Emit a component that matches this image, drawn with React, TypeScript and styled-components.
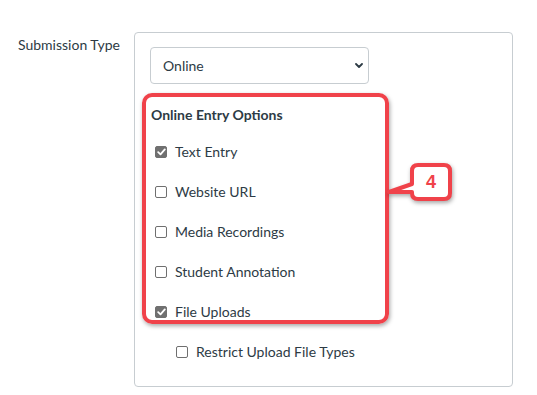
import React from 'react';
import styled, { createGlobalStyle } from 'styled-components';

const ink = '#2d3b45';
const line = '#c7cdd1';
const red = '#f0424a';

const GlobalStyle = createGlobalStyle`
  html, body {
    margin: 0;
    padding: 0;
    background: #ffffff;
  }
  body {
    font-family: Lato, 'Noto Sans', sans-serif;
    font-size: 14px;
    color: ${ink};
  }
`;

const Page = styled.div`
  position: relative;
  width: 537px;
  height: 395px;
  box-sizing: border-box;
  padding: 32px 0 0 18px;
  display: flex;
  align-items: flex-start;
`;

const FieldLabel = styled.div`
  width: 116px;
  margin-top: 3px;
  line-height: 20px;
  font-size: 14px;
`;

const Panel = styled.div`
  width: 379px;
  box-sizing: border-box;
  border: 1px solid ${line};
  border-radius: 4px;
  padding: 14px 15px 26px 15px;
  display: flex;
  flex-direction: column;
  align-items: flex-start;
`;

const SelectWrap = styled.div`
  position: relative;
  width: 219px;
  height: 37px;
`;

const Select = styled.select`
  appearance: none;
  width: 100%;
  height: 100%;
  box-sizing: border-box;
  border: 1px solid ${line};
  border-radius: 4px;
  background: #ffffff;
  padding: 0 30px 0 12px;
  font-family: Lato, 'Noto Sans', sans-serif;
  font-size: 14px;
  color: ${ink};
  outline: none;
`;

const Chevron = styled.svg`
  position: absolute;
  right: 6px;
  top: 16px;
  width: 8px;
  height: 5px;
  pointer-events: none;
`;

const Highlight = styled.div`
  margin: 9px 0 0 -8px;
  width: 247px;
  height: 231px;
  box-sizing: border-box;
  border: 4px solid ${red};
  border-radius: 10px;
  box-shadow: 1px 2px 4px rgba(0, 0, 0, 0.35);
  padding: 8px 5px 0 5px;
  display: flex;
  flex-direction: column;
  gap: 24px;
`;

const GroupTitle = styled.div`
  font-weight: 700;
  line-height: 20px;
  margin-bottom: -5px;
`;

const Option = styled.label<{ $indent?: number }>`
  display: flex;
  align-items: center;
  gap: 8px;
  height: 16px;
  margin-left: ${(p) => p.$indent ?? 4}px;
  line-height: 16px;
  font-size: 14px;
  white-space: nowrap;
`;

const Box = styled.span<{ $checked?: boolean }>`
  width: 12px;
  height: 12px;
  box-sizing: border-box;
  border-radius: 2px;
  flex: none;
  display: flex;
  align-items: center;
  justify-content: center;
  background: ${(p) => (p.$checked ? '#707070' : '#ffffff')};
  border: 1px solid ${(p) => (p.$checked ? '#707070' : '#6f6f6f')};
`;

const Restrict = styled(Option)`
  margin-top: 20px;
`;

const Callout = styled.div`
  position: absolute;
  left: 384px;
  top: 159px;
  width: 72px;
  height: 46px;
`;

const CalloutShape = styled.svg`
  position: absolute;
  inset: 0;
  overflow: visible;
  filter: drop-shadow(1px 2px 2px rgba(0, 0, 0, 0.35));
`;

const CalloutNumber = styled.span`
  position: absolute;
  left: 28px;
  top: 6px;
  width: 38px;
  height: 35px;
  display: flex;
  align-items: center;
  justify-content: center;
  font-family: 'Liberation Sans', Arial, sans-serif;
  font-weight: 700;
  font-size: 18px;
  color: ${red};
`;

const Check = () => (
  <svg width="9" height="8" viewBox="0 0 9 8">
    <path
      d="M1.2 4.2 L3.5 6.4 L7.8 1.4"
      fill="none"
      stroke="#ffffff"
      strokeWidth="1.8"
      strokeLinecap="round"
      strokeLinejoin="round"
    />
  </svg>
);

interface CheckboxProps {
  label: string;
  checked?: boolean;
}

const Checkbox = ({ checked }: Pick<CheckboxProps, 'checked'>) => (
  <Box $checked={checked}>{checked && <Check />}</Box>
);

const entryOptions: CheckboxProps[] = [
  { label: 'Text Entry', checked: true },
  { label: 'Website URL' },
  { label: 'Media Recordings' },
  { label: 'Student Annotation' },
  { label: 'File Uploads', checked: true },
];

export default function App() {
  return (
    <>
      <GlobalStyle />
      <Page>
        <FieldLabel>Submission Type</FieldLabel>
        <Panel>
          <SelectWrap>
            <Select defaultValue="online">
              <option value="online">Online</option>
            </Select>
            <Chevron viewBox="0 0 8 5">
              <path
                d="M1 1 L4 4 L7 1"
                fill="none"
                stroke={ink}
                strokeWidth="1.8"
                strokeLinecap="round"
                strokeLinejoin="round"
              />
            </Chevron>
          </SelectWrap>
          <Highlight>
            <GroupTitle>Online Entry Options</GroupTitle>
            {entryOptions.map((o) => (
              <Option key={o.label}>
                <Checkbox checked={o.checked} />
                {o.label}
              </Option>
            ))}
          </Highlight>
          <Restrict $indent={26}>
            <Checkbox />
            Restrict Upload File Types
          </Restrict>
        </Panel>
        <Callout>
          <CalloutShape viewBox="0 0 72 46" width="72" height="46">
            <path
              d="M34 6 H60 Q66 6 66 12 V34 Q66 40 60 40 H34 Q28 40 28 34 V33 L5 33 L28 25 V12 Q28 6 34 6 Z"
              fill="#ffffff"
              stroke={red}
              strokeWidth="4"
              strokeLinejoin="round"
            />
          </CalloutShape>
          <CalloutNumber>4</CalloutNumber>
        </Callout>
      </Page>
    </>
  );
}
